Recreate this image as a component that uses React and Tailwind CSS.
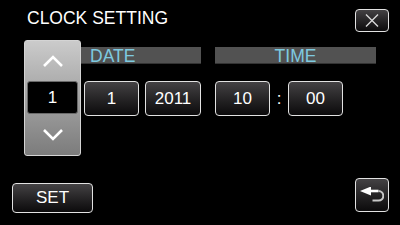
import React from "react";

const btn =
  "flex items-center justify-center rounded-[4px] border-[1.5px] border-[#e2e2e2] bg-gradient-to-b from-[#444244] to-[#0c0b0c] text-white text-[17px]";

function ValueButton({ value, width = "w-[55px]" }) {
  return <div className={`${btn} ${width} h-[35px]`}>{value}</div>;
}

function Chevron({ down }) {
  return (
    <svg width="22" height="13" viewBox="0 0 22 13">
      <polyline
        points={down ? "2,2 11,11 20,2" : "2,11 11,2 20,11"}
        fill="none"
        stroke="white"
        strokeWidth="2.6"
      />
    </svg>
  );
}

export default function App() {
  return (
    <div className="w-[400px] h-[225px] bg-black overflow-hidden font-['Liberation_Sans',Arial,sans-serif] select-none">
      {/* header: title + close */}
      <div className="flex items-start justify-between pt-[9px]">
        <div className="ml-[27px] mt-[1px] text-white text-[17.5px] leading-none">
          CLOCK SETTING
        </div>
        <div className={`${btn} w-[34px] h-[23px] mr-[11px]`}>
          <svg width="14" height="13" viewBox="0 0 14 13">
            <path d="M1 0.5 L13 12.5 M13 0.5 L1 12.5" stroke="#d8d8d8" strokeWidth="1.4" />
          </svg>
        </div>
      </div>

      {/* date / time editor */}
      <div className="flex mt-[8px] ml-[24px]">
        {/* spinner column */}
        <div className="w-[57px] h-[116px] flex flex-col rounded-[3px] border border-[#d4d4d4] bg-gradient-to-b from-[#cbcbcb] to-[#7c7c7c]">
          <div className="h-[40px] flex items-center justify-center">
            <Chevron />
          </div>
          <div className="mx-[2px] h-[33px] flex items-center justify-center rounded-[3px] bg-black border border-[#6a6a6a] text-white text-[17px]">
            1
          </div>
          <div className="flex-1 flex items-center justify-center">
            <Chevron down />
          </div>
        </div>

        <div className="flex flex-col pt-[7px]">
          <div className="flex gap-[14px]">
            <div className="w-[120px] h-[17px] pt-[1px] bg-[#525252] border-b border-[#333333] text-[#7ecae0] text-[17.5px] leading-[16px] pl-[9px]">
              DATE
            </div>
            <div className="w-[161px] h-[17px] pt-[1px] bg-[#525252] border-b border-[#333333] text-[#7ecae0] text-[17.5px] leading-[16px] text-center">
              TIME
            </div>
          </div>
          <div className="flex items-center mt-[17px] ml-[3px]">
            <ValueButton value="1" />
            <div className="w-[6px]" />
            <ValueButton value="2011" width="w-[56px]" />
            <div className="w-[14px]" />
            <ValueButton value="10" />
            <div className="w-[18px] text-center text-white text-[17px]">:</div>
            <ValueButton value="00" />
          </div>
        </div>
      </div>

      {/* footer */}
      <div className="flex items-start justify-between mt-[22px]">
        <div className={`${btn} ml-[12px] mt-[5px] w-[81px] h-[30px]`}>SET</div>
        <div className={`${btn} mr-[11px] w-[34px] h-[34px]`}>
          <svg width="24" height="16" viewBox="0 0 24 16">
            <polygon points="0,4 11,-0.5 11,8.5" fill="white" />
            <path d="M10 4 H18.5" stroke="white" strokeWidth="2.6" />
            <path d="M18.5 4 A4.8 4.8 0 0 1 18.5 13.6 H12.5" fill="none" stroke="#c8c8c8" strokeWidth="2" />
          </svg>
        </div>
      </div>
    </div>
  );
}
